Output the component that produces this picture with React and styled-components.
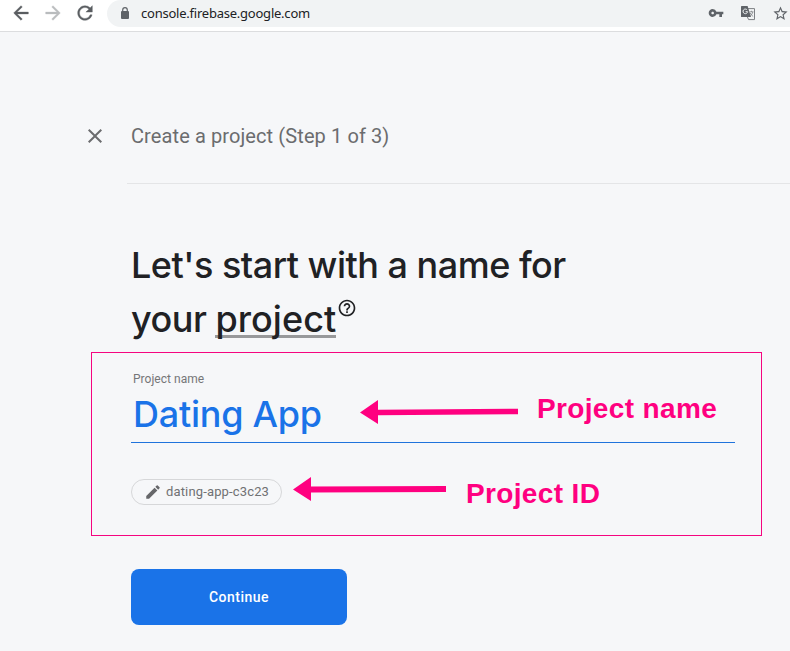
import React from "react";
import styled, { createGlobalStyle } from "styled-components";
import {
  MdArrowBack, MdArrowForward, MdRefresh, MdVpnKey,
  MdStarBorder, MdClose, MdEdit, MdHelpOutline,
} from "react-icons/md";

const GlobalStyle = createGlobalStyle`
  * { box-sizing: border-box; }
  body { margin: 0; background: #f6f7f9; overflow: hidden; }
  h1, p { margin: 0; font-weight: 400; }
  svg { display: block; flex: none; }
`;

const Page = styled.div`
  height: 651px;
  overflow: hidden;
  background: #f6f7f9;
  font-family: Roboto, sans-serif;
`;

const BrowserBar = styled.header`
  display: flex;
  height: 32px;
  padding-left: 10px;
  background: #fff;
  border-bottom: 1px solid #dcdddf;
`;

const NavButtons = styled.nav`
  display: flex;
  gap: 10px;
  width: 97px;
  padding-top: 2px;
`;

const NavIcon = styled.span`
  width: 22px;
  height: 22px;
  color: ${(p) => (p.$muted ? "#babcbe" : "#5a5d61")};

  svg { stroke: none; }
  path:not([fill="none"]) { stroke: currentColor; stroke-width: 0.4px; }
`;

const AddressBar = styled.div`
  display: flex;
  align-items: center;
  flex: 1;
  height: 27px;
  padding: 0 1px 1px 11px;
  border-radius: 14px 0 0 14px;
  background: #f1f3f4;
  color: #5f6368;
`;

const Url = styled.span`
  flex: 1;
  margin-left: 9px;
  font: 13px/18px "Noto Sans", sans-serif;
  letter-spacing: -0.23px;
  color: #202124;
`;

const AddressActions = styled.div`
  display: flex;
  align-items: center;
  gap: 16px;
`;

const TitleRow = styled.div`
  display: flex;
  align-items: center;
  height: 24px;
  margin: 92px 0 0 83px;
  color: #6b6c6e;
`;

const StepTitle = styled.p`
  margin-left: 24px;
  font-size: 20px;
  line-height: 24px;
  letter-spacing: 0.1px;
  white-space: nowrap;
`;

const Divider = styled.div`
  height: 1px;
  margin: 35px 0 0 127px;
  background: #e4e5e7;
`;

const Heading = styled.h1`
  margin: 54px 0 0 131px;
  font: 500 36px/54px Inter, sans-serif;
  color: #202124;
  height: 114px;
`;

const HeadingLine = styled.span`
  display: flex;
  white-space: pre;
  letter-spacing: -0.5px;
`;

const Term = styled.span`
  height: 46px;
  border-bottom: 3px solid #98999b;
  line-height: 54px;
  letter-spacing: 0.05px;
`;

const HelpIcon = styled.span`
  margin: 6px 0 0 1px;
`;

const Highlight = styled.section`
  width: 671px;
  height: 184px;
  margin-left: 91px;
  padding: 18px 26px 0 39px;
  border: 1px solid #f50580;
`;

const FieldLabel = styled.p`
  padding-left: 2px;
  font-size: 12px;
  line-height: 16px;
  letter-spacing: 0.03px;
  color: #757678;
`;

const NameField = styled.div`
  display: flex;
  height: 56px;
  padding-left: 2px;
  border-bottom: 1px solid #1f73dc;
`;

const NameValue = styled.span`
  width: 226px;
  font: 500 36px/54px Inter, sans-serif;
  letter-spacing: -0.25px;
  color: #1a73e8;
  white-space: nowrap;
`;

const Note = styled.span`
  margin: ${(p) => p.$offset};
  font: 700 28px/32px "Liberation Sans", sans-serif;
  letter-spacing: 0.35px;
  color: #ff0080;
  white-space: nowrap;
`;

const NameArrow = styled.svg`
  margin-top: 12px;
`;

const IdRow = styled.div`
  display: flex;
  height: 40px;
  margin-top: 32px;
`;

const IdChip = styled.div`
  display: flex;
  align-items: center;
  width: 151px;
  height: 26px;
  margin: 4px 11px 0 0;
  padding-left: 12px;
  border: 1px solid #d6d7d9;
  border-radius: 13px;
  color: #66676a;
`;

const IdText = styled.span`
  margin: -1px 0 0 4px;
  font-size: 13px;
  letter-spacing: 0.15px;
  color: #707173;
  white-space: nowrap;
`;

const ContinueButton = styled.button`
  display: block;
  width: 216px;
  height: 56px;
  margin: 33px 0 0 131px;
  padding: 0;
  border: 0;
  border-radius: 8px;
  background: #1a73e8;
  color: #fff;
  font: 500 14px/20px Roboto, sans-serif;
  letter-spacing: 0.5px;
`;

const LockIcon = () => (
  <svg width="14" height="14" viewBox="0 0 14 14" fill="none">
    <rect x="3" y="5" width="8" height="8" rx="1" fill="#5f6368" />
    <path d="M4.7 5.5V4a2.3 2.3 0 0 1 4.6 0v1.5" stroke="#5f6368" strokeWidth="1.2" />
  </svg>
);

const TranslateIcon = () => (
  <svg width="16" height="16" viewBox="0 0 16 16" fill="none">
    <path d="M6 3.6h8.5v11H8.6L7.4 12" stroke="#7d8084" />
    <path d="M1.6 1h6l3.4 11H1.6Q1 12 1 11.4V1.6Q1 1 1.6 1Z" fill="#5f6368" />
    <path d="M7.1 4.9A2.3 2.3 0 1 0 7.6 6.7H5.6" stroke="#f1f3f4" />
    <path d="M9.5 6.8h4M11.5 5.8v1M12.8 7c-.4 1.6-1.2 2.8-2.3 3.8M10.2 8c.6 1.3 1.6 2.5 3 3.5" stroke="#7d8084" strokeWidth=".8" />
  </svg>
);

export default function App() {
  return (
    <Page>
      <GlobalStyle />
      <BrowserBar>
        <NavButtons>
          <NavIcon><MdArrowBack size={22} /></NavIcon>
          <NavIcon $muted><MdArrowForward size={22} /></NavIcon>
          <NavIcon><MdRefresh size={22} /></NavIcon>
        </NavButtons>
        <AddressBar>
          <LockIcon />
          <Url>console.firebase.google.com</Url>
          <AddressActions>
            <MdVpnKey size={16} />
            <TranslateIcon />
            <MdStarBorder size={17} />
          </AddressActions>
        </AddressBar>
      </BrowserBar>

      <TitleRow>
        <MdClose size={24} />
        <StepTitle>Create a project (Step 1 of 3)</StepTitle>
      </TitleRow>
      <Divider />

      <Heading>
        <HeadingLine>Let's start with a name for</HeadingLine>
        <HeadingLine>
          your <Term>project</Term>
          <HelpIcon><MdHelpOutline size={20} /></HelpIcon>
        </HeadingLine>
      </Heading>

      <Highlight>
        <FieldLabel>Project name</FieldLabel>
        <NameField>
          <NameValue>Dating App</NameValue>
          <NameArrow width="160" height="26" viewBox="0 0 160 26">
            <path d="M1 13.5 19 1v9.8l140-1v5.5l-140 1V25Z" fill="#ff0080" />
          </NameArrow>
          <Note $offset="6px 0 0 18px">Project name</Note>
        </NameField>
        <IdRow>
          <IdChip>
            <MdEdit size={18} />
            <IdText>dating-app-c3c23</IdText>
          </IdChip>
          <svg width="154" height="28" viewBox="0 0 154 28">
            <path d="M0 14.5 18 2v9.5l135-.5v6l-135 .5V26Z" fill="#ff0080" />
          </svg>
          <Note $offset="3px 0 0 19px">Project ID</Note>
        </IdRow>
      </Highlight>

      <ContinueButton>Continue</ContinueButton>
    </Page>
  );
}
